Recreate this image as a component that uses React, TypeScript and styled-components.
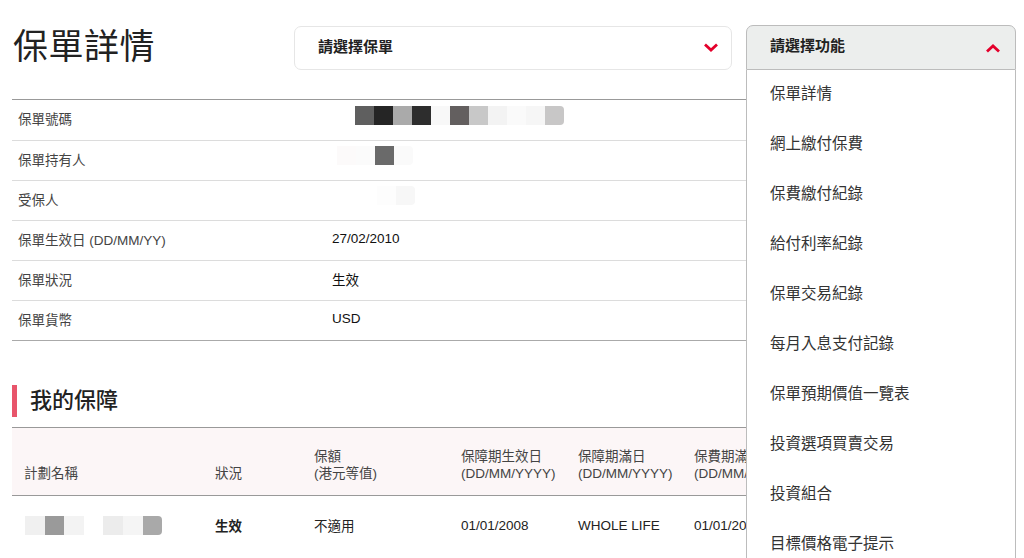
import React from "react";
import styled, { createGlobalStyle } from "styled-components";

const GlobalStyle = createGlobalStyle`
  html, body {
    margin: 0;
    padding: 0;
    background: #fff;
    overflow: hidden;
  }
  body {
    font-family: "Liberation Sans", "Noto Sans CJK TC", sans-serif;
    color: #333;
  }
  * { box-sizing: border-box; }
`;

type Redaction = { left: number; top: number; colors: string[] };

const infoRows: { label: string; value?: string; redact?: Redaction }[] = [
  {
    label: "保單號碼",
    redact: {
      left: 23,
      top: -6,
      colors: ["#5f5f5f", "#252525", "#aaaaaa", "#2d2d2d", "#f8f8f8", "#635f5f", "#c8c8c8", "#f3f3f3", "#fafafa", "#f6f6f6", "#c8c7c7"],
    },
  },
  { label: "保單持有人", redact: { left: 5, top: -6, colors: ["#fcfafa", "#fbfbfb", "#6a6a6a", "#fafafa"] } },
  { label: "受保人", redact: { left: 45, top: -6, colors: ["#fdfdfd", "#f7f7f7"] } },
  { label: "保單生效日 (DD/MM/YY)", value: "27/02/2010" },
  { label: "保單狀況", value: "生效" },
  { label: "保單貨幣", value: "USD" },
];

const menuItems = [
  "保單詳情",
  "網上繳付保費",
  "保費繳付紀錄",
  "給付利率紀錄",
  "保單交易紀錄",
  "每月入息支付記錄",
  "保單預期價值一覽表",
  "投資選項買賣交易",
  "投資組合",
  "目標價格電子提示",
];

const planColors = ["#f0f0f0", "#9a9a9a", "#f3f3f3", "#ffffff", "#ececec", "#f5f5f5", "#a9a9a9"];

function Chevron({ up }: { up?: boolean }) {
  return (
    <svg width="16" height="10" viewBox="0 0 16 10">
      <polyline
        points={up ? "2,8.5 8,3 14,8.5" : "2,1.5 8,7 14,1.5"}
        fill="none"
        stroke="#e4002b"
        strokeWidth="2.8"
        strokeLinejoin="miter"
      />
    </svg>
  );
}

function Redacted({ left, top = 0, colors, size = 19 }: { left: number; top?: number; colors: string[]; size?: number }) {
  return (
    <RedactRow style={{ marginLeft: left, marginTop: top }}>
      {colors.map((c, i) => (
        <Pixel key={i} $c={c} $size={size} $last={i === colors.length - 1} />
      ))}
    </RedactRow>
  );
}

export default function App() {
  return (
    <>
      <GlobalStyle />
      <Page>
        <Header>
          <Title>保單詳情</Title>
          <SelectBox>
            <SelectText>請選擇保單</SelectText>
            <Chevron />
          </SelectBox>
          <FunctionWrap>
            <FunctionHead>
              <SelectText>請選擇功能</SelectText>
              <Chevron up />
            </FunctionHead>
            <Menu>
              {menuItems.map((m) => (
                <MenuItem key={m}>{m}</MenuItem>
              ))}
            </Menu>
          </FunctionWrap>
        </Header>

        <InfoTable>
          {infoRows.map((r) => (
            <InfoRow key={r.label}>
              <InfoLabel>{r.label}</InfoLabel>
              {r.redact ? (
                <Redacted left={r.redact.left} top={r.redact.top} colors={r.redact.colors} />
              ) : (
                <InfoValue>{r.value}</InfoValue>
              )}
            </InfoRow>
          ))}
        </InfoTable>

        <SectionTitle>我的保障</SectionTitle>

        <TableClip>
          <CoverTable>
            <HeadRow>
              <HeadCell $first>計劃名稱</HeadCell>
              <HeadCell>狀況</HeadCell>
              <HeadCell>保額<br />(港元等值)</HeadCell>
              <HeadCell>保障期生效日<br />(DD/MM/YYYY)</HeadCell>
              <HeadCell>保障期滿日<br />(DD/MM/YYYY)</HeadCell>
              <HeadCell>保費期滿日<br />(DD/MM/YYYY)</HeadCell>
            </HeadRow>
            <DataRow>
              <DataCell $first>
                <Redacted left={1} colors={planColors} size={19.6} />
              </DataCell>
              <DataCell $bold>生效</DataCell>
              <DataCell>不適用</DataCell>
              <DataCell>01/01/2008</DataCell>
              <DataCell>WHOLE LIFE</DataCell>
              <DataCell>01/01/2028</DataCell>
            </DataRow>
          </CoverTable>
        </TableClip>
      </Page>
    </>
  );
}

const Page = styled.div`
  width: 1024px;
  height: 558px;
  padding: 25px 8px 0 12px;
  overflow: hidden;
`;

const Header = styled.div`
  display: grid;
  grid-template-columns: 268px 438px 270px;
  column-gap: 14px;
  align-items: start;
  height: 74px;
`;

const Title = styled.h1`
  margin: 0;
  padding-left: 1px;
  font-size: 35px;
  font-weight: 400;
  line-height: 44px;
  color: #222;
  letter-spacing: 0.5px;
`;

const SelectBox = styled.div`
  height: 44px;
  margin-top: 1px;
  border: 1px solid #e6e6e6;
  border-radius: 7px;
  display: flex;
  align-items: center;
  justify-content: space-between;
  padding: 0 12px 0 23px;
  background: #fff;
`;

const SelectText = styled.span`
  font-size: 15px;
  font-weight: 700;
  color: #222;
  line-height: 20px;
  margin-top: -3px;
`;

const FunctionWrap = styled.div`
  position: relative;
  z-index: 2;
`;

const FunctionHead = styled.div`
  height: 45px;
  border: 1px solid #bcbcbc;
  border-radius: 7px 7px 0 0;
  background: #eceeed;
  display: flex;
  align-items: center;
  justify-content: space-between;
  padding: 0 14px 0 23px;
`;

const Menu = styled.ul`
  position: absolute;
  top: 100%;
  left: 0;
  right: 0;
  margin: 0;
  padding: 0;
  list-style: none;
  background: #fff;
  border-left: 1px solid #bcbcbc;
  border-right: 1px solid #bcbcbc;
  height: 520px;
`;

const MenuItem = styled.li`
  height: 50px;
  display: flex;
  align-items: center;
  padding: 0 0 6px 23px;
  font-size: 15.5px;
  color: #333;
`;

const InfoTable = styled.div`
  border-top: 1px solid #999;
  border-bottom: 1px solid #aaa;
`;

const InfoRow = styled.div`
  display: grid;
  grid-template-columns: 320px 1fr;
  align-items: center;
  height: 40px;
  padding-bottom: 4px;
  & + & {
    border-top: 1px solid #dcdcdc;
  }
`;

const InfoLabel = styled.div`
  padding-left: 6px;
  font-size: 13.5px;
  color: #444;
`;

const InfoValue = styled.div`
  font-size: 13.5px;
  color: #111;
`;

const RedactRow = styled.div`
  display: flex;
`;

const Pixel = styled.span<{ $c: string; $size: number; $last?: boolean }>`
  width: ${({ $size }) => $size}px;
  height: 19px;
  background: ${({ $c }) => $c};
  border-radius: ${({ $last }) => ($last ? "0 4px 4px 0" : "0")};
`;

const SectionTitle = styled.h2`
  margin: 44px 0 0;
  height: 32px;
  border-left: 5px solid #e8556b;
  padding-left: 13px;
  font-size: 22px;
  font-weight: 500;
  line-height: 32px;
  color: #222;
`;

const TableClip = styled.div`
  margin-top: 10px;
  width: 734px;
  overflow: hidden;
`;

const CoverTable = styled.div`
  border-top: 1px solid #999;
  width: 820px;
`;

const columns = "203px 99px 147px 117px 116px 1fr";

const HeadRow = styled.div`
  display: grid;
  grid-template-columns: ${columns};
  align-items: end;
  height: 68px;
  background: #fcf6f7;
  border-bottom: 1px solid #999;
  padding-bottom: 13px;
`;

const HeadCell = styled.div<{ $first?: boolean }>`
  padding-left: ${({ $first }) => ($first ? "12px" : "0")};
  font-size: 13.5px;
  line-height: 17px;
  color: #444;
  white-space: nowrap;
`;

const DataRow = styled.div`
  display: grid;
  grid-template-columns: ${columns};
  align-items: center;
  height: 58px;
`;

const DataCell = styled.div<{ $first?: boolean; $bold?: boolean }>`
  padding-left: ${({ $first }) => ($first ? "12px" : "0")};
  font-size: 13.5px;
  font-weight: ${({ $bold }) => ($bold ? 700 : 400)};
  color: #222;
  white-space: nowrap;
`;
